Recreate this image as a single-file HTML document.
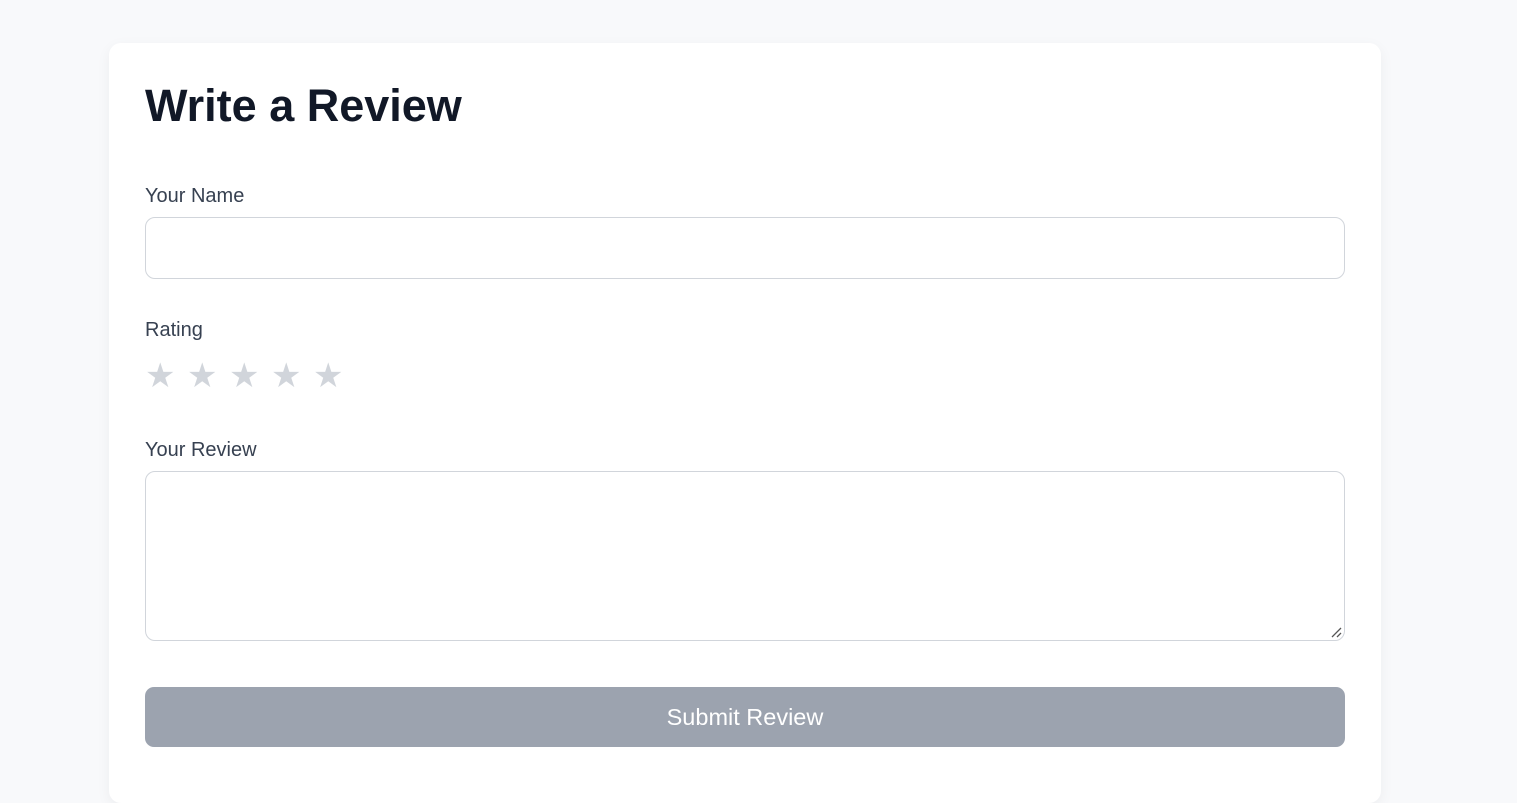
<!DOCTYPE html>
<html><head><style>
html,body{margin:0;padding:0;background:#f8f9fb;font-family:"Liberation Sans",Arial,sans-serif;width:1517px;height:771px;overflow:hidden}
.card{position:absolute;left:109px;top:43px;width:1272px;height:760px;background:#fff;border-radius:12px;box-shadow:0 4px 14px rgba(0,0,0,0.05)}
.a{position:absolute;left:36px}
h1{margin:0;font-size:45px;font-weight:bold;color:#111827;top:38px;line-height:50px}
.l{font-size:20px;color:#374151;line-height:22px}
.in{width:1200px;border:1px solid #d1d5db;border-radius:10px;box-sizing:border-box;background:#fff}
.st{font-size:34px;color:#d1d5db;line-height:34px;letter-spacing:0}
.st span{display:inline-block;width:42px}
.btn{width:1200px;height:60px;background:#9ca3af;border-radius:9px;color:#fff;font-size:23.5px;text-align:center;line-height:60px}
</style></head><body>
<div class="card">
<h1 class="a">Write a Review</h1>
<div class="a l" style="top:142px">Your Name</div>
<div class="a in" style="top:174px;height:62px"></div>
<div class="a l" style="top:276px">Rating</div>
<div class="a st" style="top:316px"><span>★</span><span>★</span><span>★</span><span>★</span><span>★</span></div>
<div class="a l" style="top:396px">Your Review</div>
<div class="a in" style="top:428px;height:170px">
<svg style="position:absolute;right:2px;bottom:2px" width="12" height="12"><path d="M2 11L11 2M7 11L11 7" stroke="#555" stroke-width="1.3"/></svg></div>
<div class="a btn" style="top:644px">Submit Review</div>
</div>
</body></html>
